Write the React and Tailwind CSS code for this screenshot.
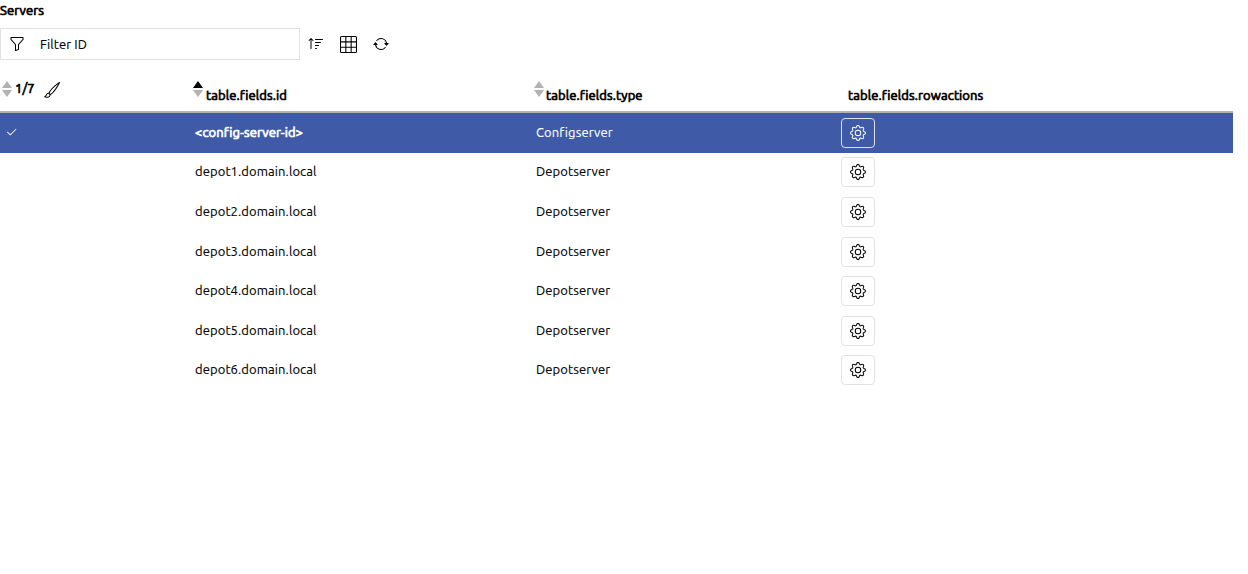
import { BsFunnel, BsSortUp, BsGrid3X3, BsArrowRepeat, BsBrush, BsGear, BsCheck2 } from "react-icons/bs";

const servers = [
  { id: "<config-server-id>", type: "Configserver", selected: true },
  { id: "depot1.domain.local", type: "Depotserver" },
  { id: "depot2.domain.local", type: "Depotserver" },
  { id: "depot3.domain.local", type: "Depotserver" },
  { id: "depot4.domain.local", type: "Depotserver" },
  { id: "depot5.domain.local", type: "Depotserver" },
  { id: "depot6.domain.local", type: "Depotserver" },
];

function SortArrows({ ascending }) {
  return (
    <svg width="10" height="16" viewBox="0 0 10 16" className="block shrink-0">
      <path d="M5 0 10 7H0Z" fill={ascending ? "#000" : "#b2b2b2"} />
      <path d="M0 9H10L5 16Z" fill="#b2b2b2" />
    </svg>
  );
}

const columns = "grid grid-cols-[193px_341px_307px_1fr]";
const bold = "[-webkit-text-stroke:0.7px_currentColor]";

export default function App() {
  return (
    <main className="h-[574px] w-[1233px] overflow-hidden bg-white font-['Ubuntu','Noto_Sans',sans-serif] text-[13px] leading-5 tracking-[0.1px] text-black [-webkit-text-stroke:0.12px_currentColor]">
      <h1 className={`h-7 ${bold}`}>Servers</h1>
      <div className="flex h-8 items-center">
        <div className="flex h-8 w-[300px] items-center border border-[#e2e2e2] pl-2">
          <BsFunnel size={16} />
          <span className="ml-[15px]">Filter ID</span>
        </div>
        <BsSortUp size={16} className="ml-2" />
        <BsGrid3X3 size={17} className="ml-4" />
        <BsArrowRepeat size={16} className="ml-4" />
      </div>
      <div className={`${columns} h-[53px] border-b-2 border-[#b2b2b2]`}>
        <div className="flex items-start pt-[21px] pl-0.5">
          <SortArrows />
          <span className={`-mt-[3px] ml-[3px] ${bold}`}>1/7</span>
          <BsBrush size={16} className="mt-px ml-[9px]" />
        </div>
        <div className="flex pt-[21px]">
          <SortArrows ascending />
          <span className={`mt-1 ml-[3px] ${bold}`}>table.fields.id</span>
        </div>
        <div className="flex pt-[21px]">
          <SortArrows />
          <span className={`mt-1 ml-0.5 ${bold}`}>table.fields.type</span>
        </div>
        <div className={`pt-[25px] pl-[7px] ${bold}`}>table.fields.rowactions</div>
      </div>
      {servers.map((s) => (
        <div
          key={s.id}
          className={`${columns} h-[39.6px] ${s.selected ? "bg-[#3f5aa6] text-white" : ""}`}
        >
          <div className="pt-[13px] pl-[5px]">{s.selected && <BsCheck2 size={13} />}</div>
          <div className={`pt-[8.8px] pl-0.5 ${s.selected ? bold : ""}`}>{s.id}</div>
          <div className="pt-[8.8px] pl-0.5">{s.type}</div>
          <div className="pt-[4.8px]">
            <button className="flex h-[30px] w-[34px] items-center justify-center rounded-[4px] border border-[#e2e2e2]">
              <BsGear size={16} />
            </button>
          </div>
        </div>
      ))}
    </main>
  );
}
